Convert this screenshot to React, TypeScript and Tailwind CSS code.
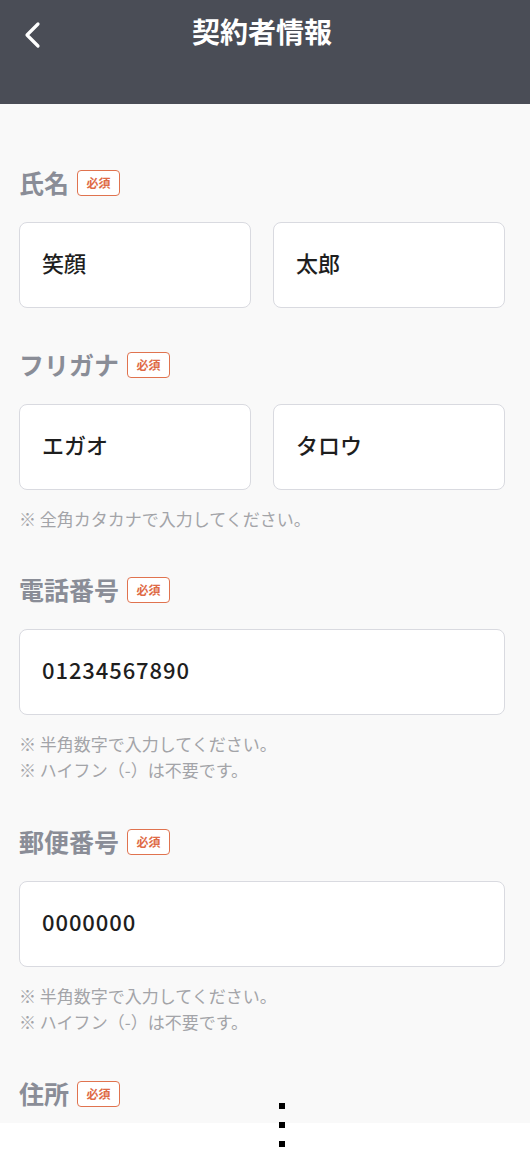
import React from "react";

function Badge() {
  return (
    <span className="ml-[8px] flex h-[26px] w-[43px] items-center justify-center rounded-[4px] border-[1.5px] border-[#e0734f] bg-white text-[12px] font-bold leading-none text-[#de6a45]">
      必須
    </span>
  );
}

function Label(props: { text: string; className?: string }) {
  return (
    <div className={`flex h-[30px] items-center ${props.className ?? ""}`}>
      <span className="-mt-[3px] text-[25px] font-bold leading-[30px] text-[#8a8d97]">{props.text}</span>
      <Badge />
    </div>
  );
}

function Field(props: { value: string; digits?: boolean }) {
  return (
    <div
      className={`flex h-[86px] flex-1 items-center rounded-[8px] border border-[#d9dae0] bg-white px-[22px] pb-[6px] text-[22px] font-medium text-[#1e1e1e] ${
        props.digits ? "tracking-[0.9px]" : ""
      }`}
    >
      {props.value}
    </div>
  );
}

function Notes(props: { lines: string[] }) {
  return (
    <div className="mt-[16px] text-[17px] leading-[26px] text-[#a3a4a8]">
      {props.lines.map((l) => (
        <div key={l}>{l}</div>
      ))}
    </div>
  );
}

export default function App() {
  return (
    <div
      className="min-h-[1176px] w-[530px] bg-white"
      style={{ fontFamily: '"Noto Sans CJK JP", "Noto Sans", sans-serif' }}
    >
      <div className="relative h-[104px] bg-[#4a4d56]">
        <svg className="absolute left-[22px] top-[21px]" width="22" height="28" viewBox="0 0 22 28" fill="none">
          <path d="M16 3 L5 14 L16 25" stroke="white" strokeWidth="3.2" strokeLinecap="round" strokeLinejoin="round" />
        </svg>
        <div className="pr-[6px] pt-[12px] text-center text-[28px] font-bold leading-[38px] text-white">契約者情報</div>
      </div>
      <div className="bg-[#f9f9f9] px-[19px] pb-[14px] pt-[64px]">
        <Label text="氏名" />
        <div className="mt-[24px] flex gap-[22px] pr-[6px]">
          <Field value="笑顔" />
          <Field value="太郎" />
        </div>

        <Label text="フリガナ" className="mt-[42px]" />
        <div className="mt-[24px] flex gap-[22px] pr-[6px]">
          <Field value="エガオ" />
          <Field value="タロウ" />
        </div>
        <Notes lines={["※ 全角カタカナで入力してください。"]} />

        <Label text="電話番号" className="mt-[43px]" />
        <div className="mt-[24px] flex pr-[6px]">
          <Field value="01234567890" digits />
        </div>
        <Notes lines={["※ 半角数字で入力してください。", "※ ハイフン（-）は不要です。"]} />

        <Label text="郵便番号" className="mt-[44px]" />
        <div className="mt-[24px] flex pr-[6px]">
          <Field value="0000000" digits />
        </div>
        <Notes lines={["※ 半角数字で入力してください。", "※ ハイフン（-）は不要です。"]} />

        <Label text="住所" className="mt-[44px]" />
      </div>
      <div className="flex flex-col items-center gap-[13px] pl-[34px]">
        <span className="-mt-[20px] block h-[6px] w-[6px] bg-black" />
        <span className="block h-[6px] w-[6px] bg-black" />
        <span className="block h-[6px] w-[6px] bg-black" />
      </div>
    </div>
  );
}
